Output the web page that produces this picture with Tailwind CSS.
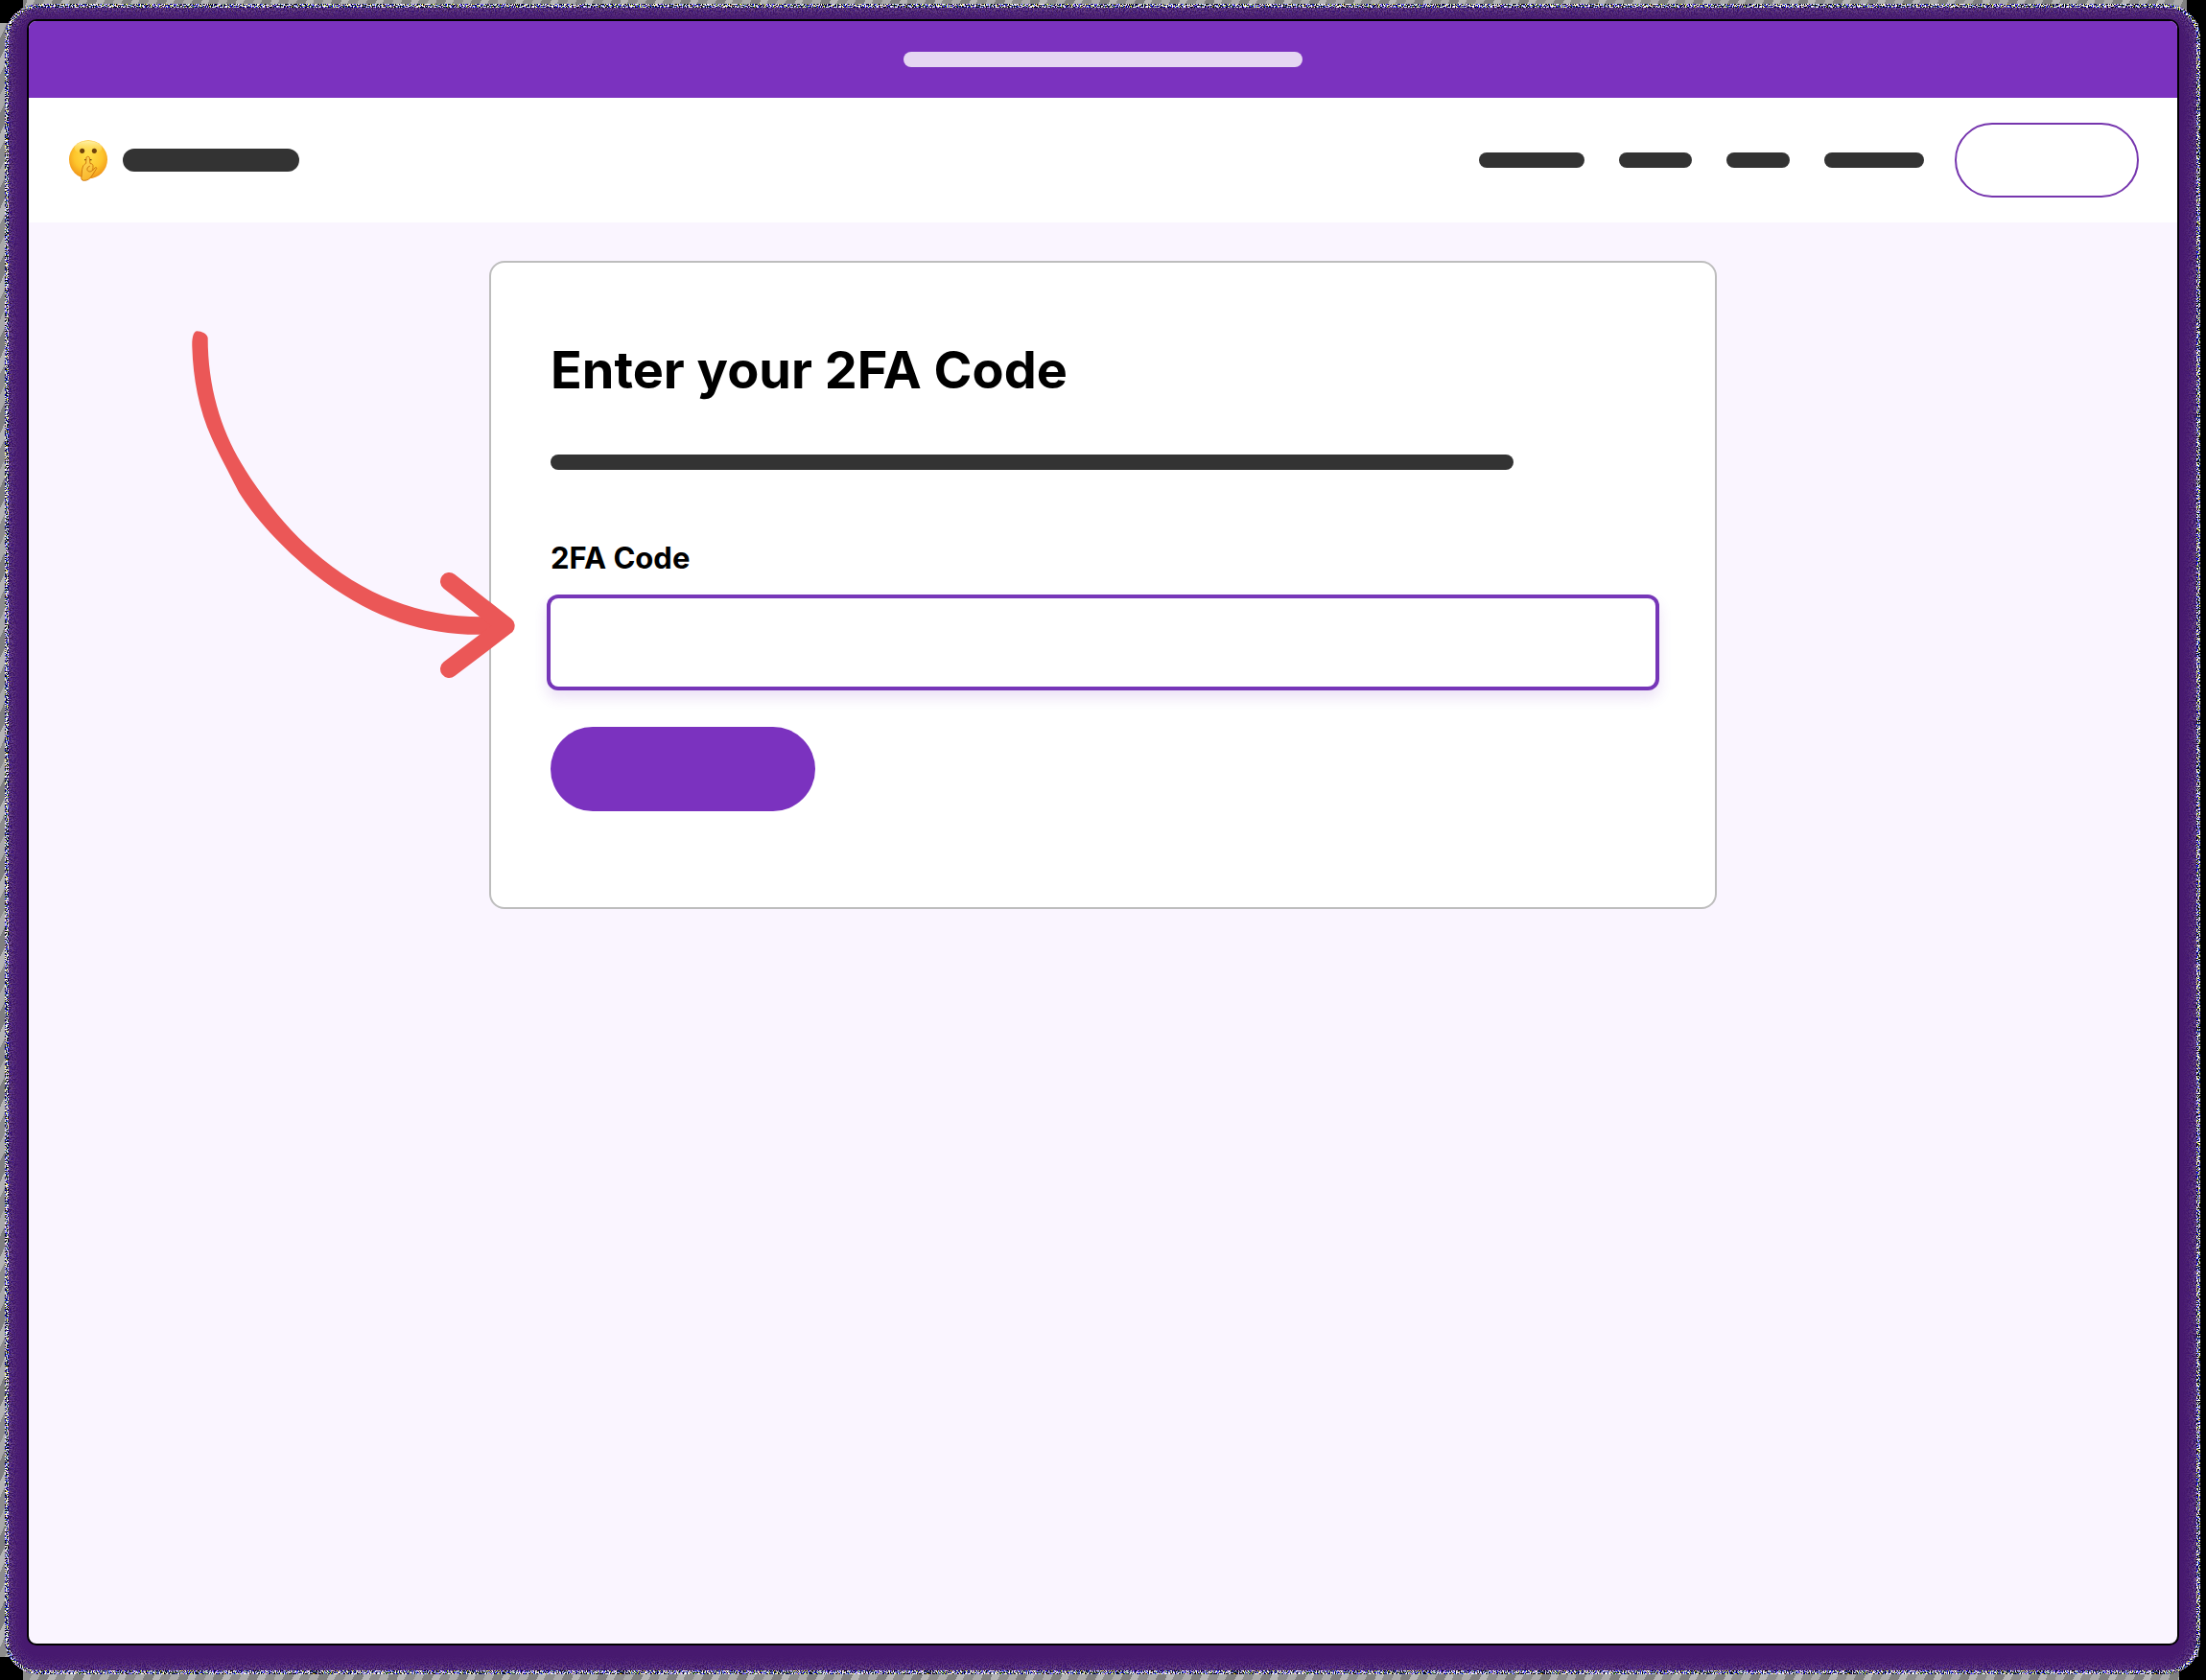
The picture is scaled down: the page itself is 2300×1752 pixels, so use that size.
<!DOCTYPE html>
<html lang="en">
<head>
<meta charset="utf-8">
<meta name="viewport" content="width=device-width, initial-scale=1">
<title>Enter your 2FA Code</title>
<script src="https://cdn.jsdelivr.net/npm/@tailwindcss/browser@4"></script>
</head>
<body class="relative flex min-h-screen bg-[repeating-linear-gradient(115deg,#8c8c8c_0_9px,#a9a9a9_9px_17px,#7f7f7f_17px_26px,#b4b4b4_26px_33px)] pt-1 pr-[6px] pb-[6px] pl-[5px] font-[Inter,Arial,sans-serif] text-black">
  <svg class="absolute size-0" aria-hidden="true">
    <filter id="static" x="0" y="0" width="1" height="1" color-interpolation-filters="sRGB">
      <feTurbulence type="fractalNoise" baseFrequency="0.8" numOctaves="2" seed="4" result="n"/>
      <feColorMatrix in="n" values="7 1.5 0 0 -3.8  6 2.5 0 0 -3.8  5 0 4 0 -3.8  0 0 0 0 1"/>
      <feComposite operator="in" in2="SourceGraphic"/>
    </filter>
  </svg>

  <!-- square corners behind the rounded frame -->
  <div class="absolute top-0 left-0 size-6 bg-black"></div>
  <div class="absolute top-0 right-0 h-6 w-5 bg-black"></div>
  <div class="absolute bottom-0 left-0 size-6 bg-black"></div>
  <div class="absolute right-0 bottom-0 h-6 w-7 bg-black"></div>
  <div class="absolute inset-y-0 right-0 w-2 bg-black"></div>

  <div class="relative flex flex-1 rounded-[36px] bg-[#47196f] pt-4 pr-[22px] pb-[30px] pl-[23px]">
    <div class="pointer-events-none absolute inset-0 rounded-[36px] shadow-[inset_0_0_14px_6px_#5a4a80] [filter:url(#static)] opacity-40"></div>
    <div class="pointer-events-none absolute inset-0 rounded-[36px] border-4 border-white [filter:url(#static)]"></div>

    <div class="relative flex flex-1 flex-col overflow-hidden rounded-[10px] border-2 border-black bg-[#faf5ff]">
      <div class="flex h-20 items-center justify-center bg-[#7b32bf] px-6">
        <div class="h-4 w-[416px] rounded-full bg-[#e5d6f2]"></div>
      </div>

      <header class="flex h-[130px] items-center justify-between bg-white pr-10 pl-[42px]">
        <a href="#" aria-label="Home" class="flex items-center gap-[14px]">
          <svg class="h-[43px] w-[42px]" viewBox="216 434 126 129" aria-hidden="true">
            <defs>
              <radialGradient id="face" cx="0.5" cy="0.4" r="0.62">
                <stop offset="0" stop-color="#ffe04a"/>
                <stop offset="0.6" stop-color="#fdc52c"/>
                <stop offset="0.88" stop-color="#f4a01d"/>
                <stop offset="1" stop-color="#e58a14"/>
              </radialGradient>
              <linearGradient id="shine" x1="0" y1="0" x2="0" y2="1">
                <stop offset="0" stop-color="#fff6b5" stop-opacity="0.9"/>
                <stop offset="1" stop-color="#ffe45c" stop-opacity="0"/>
              </linearGradient>
              <linearGradient id="hand" x1="0" y1="0" x2="0.3" y2="1">
                <stop offset="0" stop-color="#ffdc5c"/>
                <stop offset="1" stop-color="#f9b62c"/>
              </linearGradient>
            </defs>
            <circle cx="276" cy="495" r="60" fill="url(#face)"/>
            <ellipse cx="276" cy="459" rx="43" ry="22" fill="url(#shine)"/>
            <ellipse cx="257" cy="468" rx="7.5" ry="8" fill="#70430b"/>
            <ellipse cx="295" cy="468" rx="7.5" ry="8" fill="#70430b"/>
            <path d="M266 496h4M281 496h4" stroke="#70430b" stroke-width="4" stroke-linecap="round"/>
            <path d="M270 491C270 484 280 484 280 491L282 508C288 507 292 511 291 519L290 529L297 521C301 518 304 521 301 525L288 545C281 556 274 561 262 561C255 561 253 555 255 548C257 538 255 528 259 518C261 512 266 509 269 507Z" fill="url(#hand)" stroke="#d0790f" stroke-width="3"/>
            <path d="M280 516C272 518 270 529 277 532C282 534 287 532 290 528" fill="none" stroke="#c8740d" stroke-width="3" stroke-linecap="round"/>
          </svg>
          <span class="h-6 w-[184px] rounded-full bg-[#333]"></span>
        </a>
        <div class="flex items-center gap-8">
          <nav class="flex items-center gap-9">
            <a href="#" aria-label="Menu item 1" class="h-4 w-[110px] rounded-full bg-[#333]"></a>
            <a href="#" aria-label="Menu item 2" class="h-4 w-[76px] rounded-full bg-[#333]"></a>
            <a href="#" aria-label="Menu item 3" class="h-4 w-[66px] rounded-full bg-[#333]"></a>
            <a href="#" aria-label="Menu item 4" class="h-4 w-[104px] rounded-full bg-[#333]"></a>
          </nav>
          <button type="button" aria-label="Account" class="h-[78px] w-48 rounded-full border-2 border-[#7636ae] bg-white"></button>
        </div>
      </header>

      <main class="flex flex-1 items-start justify-center px-6 py-10">
        <form class="relative w-full max-w-[1280px] rounded-2xl border-2 border-[#bdbdbd] bg-white px-[62px] pt-20 pb-[100px]">
          <h1 class="text-[54px] leading-[64px] font-bold">Enter your 2FA Code</h1>
          <div class="mt-14 h-4 w-full max-w-[1004px] rounded-full bg-[#333]"></div>
          <label for="code" class="mt-[74px] block text-[31px] leading-9 font-bold">2FA Code</label>
          <input id="code" type="text" autocomplete="one-time-code" class="mt-6 block h-[92px] w-full rounded-lg bg-white px-6 text-[31px] shadow-[0_8px_14px_4px_rgba(123,50,191,0.14)] ring-4 ring-[#7636b8] outline-none">
          <button type="submit" aria-label="Submit" class="mt-[42px] block h-[88px] w-[276px] rounded-full bg-[#7b32bf]"></button>

          <svg class="pointer-events-none absolute top-[46px] left-[-332px] h-[410px] w-[380px]" viewBox="0 0 1140 1230" aria-hidden="true">
            <path fill="#eb5757" d="M75 76C64 78 60 100 61 125C64 225 82 320 122 410C145 462 180 525 207 580C270 680 375 785 475 860C640 980 800 1030 980 1025L1010 1000L980 970C780 973 600 905 440 765C360 695 285 605 215 490C150 380 110 250 110 97C108 85 92 76 75 76Z"/>
            <path fill="none" stroke="#eb5757" stroke-width="56" stroke-linecap="round" stroke-linejoin="round" d="M865 859L1042 998L865 1133"/>
          </svg>
        </form>
      </main>
    </div>
  </div>
</body>
</html>
